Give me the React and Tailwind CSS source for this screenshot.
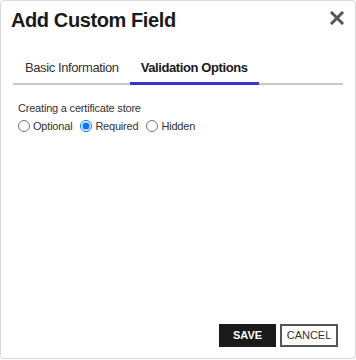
import React, { useState } from 'react';

function App() {
  const [tab, setTab] = useState('validation');
  const [choice, setChoice] = useState('required');

  const options = [
    { id: 'optional', label: 'Optional' },
    { id: 'required', label: 'Required' },
    { id: 'hidden', label: 'Hidden' },
  ];

  return (
    <div className="w-[356px] h-[360px] bg-white" style={{ fontFamily: '"Liberation Sans", Arial, sans-serif' }}>
      <div className="flex flex-col h-[359px] border border-[#d9d9d9] rounded-[4px] bg-white">
        <header className="flex items-start justify-between pl-[10px] pr-[11px] pt-[7px]">
          <h2 className="text-[20px] leading-[24px] font-bold tracking-[-0.4px] text-[#1a1a1a]">Add Custom Field</h2>
          <button className="mt-[3px] text-[#555] hover:text-black">
            <svg className="w-[14px] h-[14px]" viewBox="0 0 14 14">
              <path d="M2 2L12 12M12 2L2 12" stroke="currentColor" strokeWidth="3" strokeLinecap="square" fill="none" />
            </svg>
          </button>
        </header>

        <nav className="mx-[12px] mt-[28px] flex border-b-2 border-[#c8c8c8]">
          <button
            onClick={() => setTab('basic')}
            className={`px-[12px] pb-[6px] text-[13px] leading-[16px] tracking-[-0.4px] -mb-[2px] border-b-[3px] ${tab === 'basic' ? 'font-bold text-[#1a1a1a] border-[#3535d6]' : 'text-[#333] border-transparent'}`}
          >
            Basic Information
          </button>
          <button
            onClick={() => setTab('validation')}
            className={`ml-[-1px] px-[11px] pb-[6px] text-[13px] leading-[16px] tracking-[-0.4px] -mb-[2px] border-b-[3px] ${tab === 'validation' ? 'font-bold text-[#1a1a1a] border-[#3535d6]' : 'text-[#333] border-transparent'}`}
          >
            Validation Options
          </button>
        </nav>

        <div className="grow px-[17px] pt-[16px]">
          {tab === 'validation' && (
            <>
              <div className="text-[11px] leading-[14px] tracking-[-0.2px] text-[#333]">Creating a certificate store</div>
              <div className="mt-[3px] flex items-center gap-[8px] text-[11px] tracking-[-0.2px] text-[#333]">
                {options.map((o) => (
                  <label key={o.id} className="flex items-center gap-[3px]">
                    <input
                      type="radio"
                      name="validation"
                      checked={choice === o.id}
                      onChange={() => setChoice(o.id)}
                      className="m-0 w-[12px] h-[12px]"
                    />
                    {o.label}
                  </label>
                ))}
              </div>
            </>
          )}
        </div>

        <footer className="flex justify-end gap-[4px] pr-[17px] pb-[11px]">
          <button className="w-[57px] h-[23px] bg-[#1a1a1a] text-white text-[11px] font-bold">SAVE</button>
          <button className="w-[58px] h-[23px] border-2 border-[#555] text-[#333] text-[11px]">CANCEL</button>
        </footer>
      </div>
    </div>
  );
}

export default App;
